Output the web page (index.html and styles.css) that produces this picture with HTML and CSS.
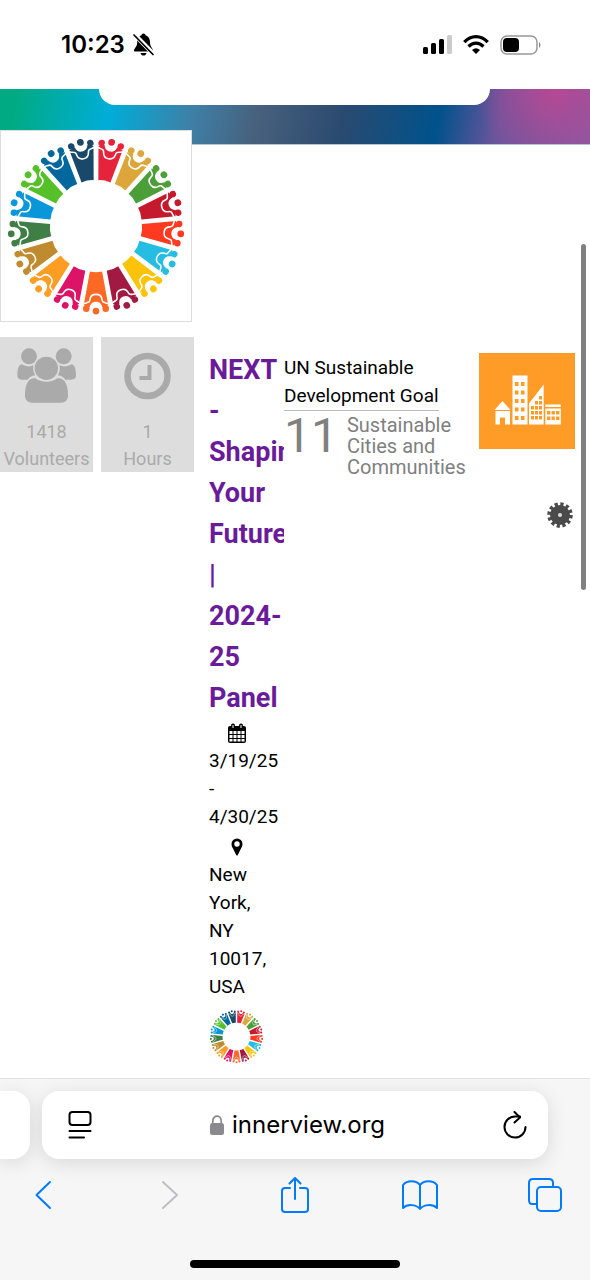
FILE: index.html
```html
<!DOCTYPE html>
<html lang="en">
<head>
    <meta charset="UTF-8">
    <meta name="viewport" content="width=device-width, initial-scale=1.0">
    <title>innerview.org</title>
    <link rel="stylesheet" href="styles.css">
</head>
<body>
    <!-- shared shapes -->
    <svg class="defs" aria-hidden="true">
        <symbol id="person" viewBox="-16 -96 32 60" overflow="visible">
            <path fill="currentColor" d="M-6.200-46Q0-47.500 6.200-46L12.400-80L6.400-82C5.500-78 3-76.500 0-76.500S-5.500-78-6.400-82L-12.400-80Z"/>
            <circle fill="currentColor" cx="-9.800" cy="-83.500" r="3.300"/>
            <circle fill="currentColor" cx="9.800" cy="-83.500" r="3.300"/>
            <circle fill="currentColor" cx="0" cy="-86" r="3.400"/>
            <path fill="none" stroke="#fff" stroke-width="1.600" d="M-13-78.500C-8-77-6.500-78-6-74C-5-67.500 5-67.500 6-74C6.500-78 8-77 13-78.500"/>
        </symbol>
        <symbol id="wheel" viewBox="-96 -96 192 192">
            <g id="wheel-people"></g>
        </symbol>
    </svg>

    <header class="status">
        <div class="status-left">
            <span class="time">10:23</span>
            <svg width="21" height="23" viewBox="0 0 21 23">
                <path d="M10.500 0.500C9.300 0.500 8.600 1.300 8.500 2.300C5 3.500 4.200 6.500 4.200 9.500C4.200 13.500 1 15.500 1 17.500C1 18.300 1.500 18.500 2.200 18.500H18.800C19.500 18.500 20 18.300 20 17.500C20 15.500 17 13.500 17 9.500C17 6.500 16 3.500 12.500 2.300C12.400 1.300 11.700 0.500 10.500 0.500Z"/>
                <path d="M7.500 20H13.500C13 22 11.800 22.500 10.500 22.500S8 22 7.500 20Z"/>
                <path d="M1.500 1.500L20.500 21" stroke="#fff" stroke-width="4.500"/>
                <path d="M1 2L20 21.500" stroke="#000" stroke-width="1.700" stroke-linecap="round"/>
            </svg>
        </div>
        <div class="status-right">
            <svg width="29" height="19" viewBox="0 0 29 19">
                <rect x="0" y="12" width="5" height="7" rx="1.500"/>
                <rect x="8" y="8" width="5" height="11" rx="1.500"/>
                <rect x="16" y="4" width="5" height="15" rx="1.500"/>
                <rect x="24" y="0" width="5" height="19" rx="1.500" fill="#ccc"/>
            </svg>
            <svg width="26" height="19" viewBox="0 0 26 19">
                <g fill="none" stroke="#000" stroke-width="3.300">
                    <path d="M1.300 7.200C8-0.200 18-0.200 24.700 7.200"/>
                    <path d="M5.500 11.500C10 7 16 7 20.500 11.500"/>
                </g>
                <path d="M9 15Q13 11.500 17 15L13 19Z"/>
            </svg>
            <svg width="41" height="20" viewBox="0 0 41 20">
                <rect x="1" y="1" width="36" height="18" rx="6" fill="none" stroke="#999" stroke-width="1.500"/>
                <rect x="3" y="3" width="16" height="14" rx="4"/>
                <path d="M39 7Q42 10 39 13Z" fill="#888"/>
            </svg>
        </div>
    </header>

    <main class="page">
        <div class="hero">
            <div class="hero-card"></div>
        </div>
        <div class="logo">
            <svg class="wheel" viewBox="-96 -96 192 192" role="img" aria-label="Global Goals"><use href="#wheel" x="-96" y="-96" width="192" height="192"/></svg>
        </div>

        <div class="columns">
            <div class="stats">
                <div class="stat">
                    <svg width="59" height="55" viewBox="51 55 177 165">
                        <circle cx="87" cy="80" r="24"/>
                        <circle cx="191" cy="80" r="24"/>
                        <path d="M66 104C75 111 91 112 100 107C98 120 101 130 106 137C94 138 88 143 83 150H66C56 150 52 145 52 136C52 120 56 104 66 104Z"/>
                        <path d="M214 104C205 111 189 112 179 107C181 120 178 130 173 137C185 138 191 143 196 150H213C224 150 228 145 228 136C228 120 224 104 214 104Z"/>
                        <circle cx="139" cy="116" r="35"/>
                        <path d="M106 146C124 160 154 160 172 146C195 144 204 166 204 197C204 212 196 219 182 219H98C83 219 75 212 75 197C75 166 84 144 106 146Z"/>
                    </svg>
                    <span>1418</span>
                    <span>Volunteers</span>
                </div>
                <div class="stat">
                    <svg width="47" height="55" viewBox="0 0 47 55">
                        <circle cx="23.500" cy="28" r="20" fill="none" stroke="#aaa" stroke-width="6.500"/>
                        <path d="M25.500 17V30H15.500" fill="none" stroke="#aaa" stroke-width="4"/>
                    </svg>
                    <span>1</span>
                    <span>Hours</span>
                </div>
            </div>

            <div class="event">
                <h1><a href="#">NEXT - Shaping Your Future | 2024-25 Panel</a></h1>
                <p>
                    <svg class="icon" width="20" height="20" viewBox="0 0 20 20">
                        <path fill-rule="evenodd" d="M1 5Q1 3 3 3H17Q19 3 19 5V18Q19 20 17 20H3Q1 20 1 18ZM2.500 8V11H5.500V8ZM6.500 8V11H9.500V8ZM10.500 8V11H13.500V8ZM14.500 8V11H17.500V8ZM2.500 12V15H5.500V12ZM6.500 12V15H9.500V12ZM10.500 12V15H13.500V12ZM14.500 12V15H17.500V12ZM2.500 16V18.500H5.500V16ZM6.500 16V18.500H9.500V16ZM10.500 16V18.500H13.500V16ZM14.500 16V18.500H17.500V16Z"/>
                        <rect x="4.500" y="1" width="3" height="5" rx="1.300" stroke="#000"/>
                        <rect x="12.500" y="1" width="3" height="5" rx="1.300" stroke="#000"/>
                        <path d="M6 2V5M14 2V5" stroke="#fff"/>
                    </svg>
                    3/19/25 - 4/30/25
                </p>
                <p>
                    <svg class="icon" width="12" height="18" viewBox="0 0 12 18">
                        <path fill-rule="evenodd" d="M6 0.500A5.500 5.500 0 0 0 0.500 6C0.500 8 1.500 9.500 2 10.500L5.200 17Q6 18 6.800 17L10 10.500C10.500 9.500 11.500 8 11.500 6A5.500 5.500 0 0 0 6 0.500ZM6 3.300A2.700 2.700 0 1 1 6 8.700A2.700 2.700 0 1 1 6 3.300Z"/>
                    </svg>
                    New York, NY 10017, USA
                </p>
                <svg class="wheel small" viewBox="-92 -92 184 184" aria-hidden="true"><use href="#wheel" x="-96" y="-96" width="192" height="192"/></svg>
            </div>

            <div class="goal">
                <h2>UN Sustainable<br>Development Goal</h2>
                <div class="goal-name">
                    <span class="number">11</span>
                    <span>Sustainable Cities and Communities</span>
                </div>
            </div>

            <div class="side">
                <svg class="goal-icon" viewBox="0 0 96 96" role="img" aria-label="Sustainable Cities and Communities">
                    <rect width="96" height="96" fill="#ff9c27"/>
                    <g fill="#fff">
                        <path d="M23.500 48L31.500 57H15.500Z"/>
                        <path d="M16.500 58H31V71.500H26V64.500H21V71.500H16.500Z"/>
                        <rect x="33.500" y="22.500" width="15" height="49"/>
                        <path d="M50 50.500L64.700 31.500V71.500H50Z"/>
                        <rect x="66.300" y="51.500" width="15.500" height="2.500"/>
                        <rect x="66.300" y="55.500" width="15.500" height="16"/>
                    </g>
                    <g fill="none" stroke="#ff9c27">
                        <path d="M37.700 29V67M43.700 29V67" stroke-width="3.600" stroke-dasharray="4 4.500"/>
                        <path d="M53.500 53V67M57.500 48V67M61.500 43V67" stroke-width="3" stroke-dasharray="3.500 1.500"/>
                        <path d="M69.700 58V67M74.200 58V67M78.700 58V67" stroke-width="3.300" stroke-dasharray="3.500 2"/>
                    </g>
                </svg>
                <button class="gear" aria-label="Settings">
                    <svg width="26" height="26" viewBox="-13 -13 26 26">
                        <circle r="10" fill="#4a4a4a"/>
                        <circle r="11" fill="none" stroke="#4a4a4a" stroke-width="3.500" stroke-dasharray="3.200 2.560"/>
                        <circle r="2" fill="#ddd"/>
                    </svg>
                </button>
            </div>
        </div>
        <div class="scroll-thumb"></div>
    </main>

    <footer class="browser">
        <div class="tabs">
            <div class="tab-edge"></div>
            <div class="address">
                <button aria-label="Page menu">
                    <svg width="24" height="28" viewBox="0 0 24 28" fill="none" stroke="#000" stroke-width="2" stroke-linecap="round">
                        <rect x="1.500" y="1" width="21" height="13" rx="3"/>
                        <path d="M1.500 20H22.500M1.500 26.500H16"/>
                    </svg>
                </button>
                <a class="url" href="#">
                    <svg width="14" height="20" viewBox="0 0 14 20">
                        <rect x="0" y="8" width="14" height="12" rx="2.500" fill="#8a8a8e"/>
                        <path d="M2.800 9V6C2.800-0.500 11.200-0.500 11.200 6V9" fill="none" stroke="#8a8a8e" stroke-width="1.700"/>
                    </svg>
                    <span>innerview.org</span>
                </a>
                <button aria-label="Reload">
                    <svg width="24" height="28" viewBox="0 0 24 28" fill="none" stroke="#000" stroke-width="2" stroke-linecap="round" stroke-linejoin="round">
                        <path d="M22.500 16A10.500 10.500 0 1 1 12 5.500H17"/>
                        <path d="M11.500 1L17 6.500L11.500 11.500"/>
                    </svg>
                </button>
            </div>
        </div>
        <nav class="tools">
            <button aria-label="Back">
                <svg width="36" height="36" viewBox="0 0 36 36"><path d="M24 5L10.500 18L24 31"/></svg>
            </button>
            <button class="off" aria-label="Forward" disabled>
                <svg width="36" height="36" viewBox="0 0 36 36"><path d="M12 5L26 18L12 31"/></svg>
            </button>
            <button aria-label="Share">
                <svg width="36" height="36" viewBox="0 0 36 36"><path d="M13 11H8Q5 11 5 14V32Q5 35 8 35H28Q31 35 31 32V14Q31 11 28 11H23M18 22V1M12.500 6.500L18 1L23.500 6.500"/></svg>
            </button>
            <button aria-label="Bookmarks">
                <svg width="36" height="36" viewBox="0 0 36 36"><path d="M18 8C14 3 5 3 1 8V31C5 27 14 27 18 32C22 27 31 27 35 31V8C31 3 22 3 18 8V31"/></svg>
            </button>
            <button aria-label="Tabs">
                <svg width="36" height="36" viewBox="0 0 36 36"><rect x="10" y="10" width="24" height="24" rx="4"/><path d="M9.500 27H5Q2 27 2 23V6Q2 2 6 2H22Q26 2 26 6V9.500"/></svg>
            </button>
        </nav>
        <div class="home-bar"></div>
    </footer>

    <script src="wheel.js"></script>
</body>
</html>
```

FILE: styles.css
```css
* {
    box-sizing: border-box;
    margin: 0;
    padding: 0;
}
body {
    display: flex;
    flex-direction: column;
    min-height: 100vh;
    background: #fff;
    color: #000;
    font-family: Roboto, "Liberation Sans", sans-serif;
    font-size: 19px;
    line-height: 28px;
}
svg {
    display: block;
    flex-shrink: 0;
}
button {
    border: 0;
    background: none;
}
a {
    color: inherit;
    text-decoration: none;
}
.defs {
    position: absolute;
    width: 0;
    height: 0;
}

/* status bar */
.status {
    display: flex;
    justify-content: space-between;
    align-items: center;
    height: 89px;
    padding: 0 49px 0 61px;
}
.status-left {
    display: flex;
    align-items: center;
    gap: 8px;
}
.status-right {
    display: flex;
    align-items: center;
    gap: 11px;
}
.time {
    font-family: Inter, sans-serif;
    font-size: 24px;
    font-weight: 600;
}

/* page */
.page {
    position: relative;
    flex: 1;
}
.hero {
    height: 56px;
    padding: 0 100px 0 99px;
    border-bottom: 1px solid #b9c3d6;
    background: radial-gradient(circle at 94% 0, #b74894 0, rgba(183, 72, 148, 0) 80px),
        linear-gradient(100deg, #00ab84 3%, #00add8 19%, #3f7fa6 33%, #47607c 44%, #2a4a70 58%, #00528c 74%, #6a559c 84%, #8a5aa3 100%);
}
.hero-card {
    height: 16px;
    border-radius: 0 0 20px 20px;
    background: #fff;
}
.logo {
    position: relative;
    width: 192px;
    margin-top: -15px;
    border: 1px solid #ddd;
    background: #fff;
}
.wheel {
    width: 100%;
}
.columns {
    display: grid;
    grid-template-columns: 194px 75px 1fr 96px;
    margin-top: 15px;
    padding-right: 15px;
    align-items: start;
}
.stats {
    display: grid;
    grid-template-columns: 1fr 1fr;
    gap: 8px;
}
.stat {
    display: flex;
    flex-direction: column;
    align-items: center;
    padding-top: 11px;
    background: #ddd;
    color: #aaa;
    fill: #aaa;
    font-size: 18px;
    line-height: 27px;
}
.stat svg {
    margin-bottom: 15px;
}
.event {
    width: 75px;
    margin-left: 15px;
    padding: 13px 20px 0 0;
    overflow: hidden;
}
.event h1 {
    color: #6a1b9a;
    font-size: 27px;
    line-height: 41px;
}
.event p {
    margin-bottom: 2px;
}
.icon {
    height: 28px;
    margin: 0 auto;
}
.small {
    margin-top: 8px;
}
.goal {
    margin-left: 15px;
    padding: 17px 12px 0 0;
}
.goal h2 {
    width: fit-content;
    border-bottom: 1px solid #bbb;
    font-size: 19px;
    font-weight: 400;
}
.goal-name {
    display: flex;
    gap: 9px;
    padding-top: 4px;
    color: #808080;
    font-size: 20px;
    line-height: 21px;
}
.number {
    font-size: 48px;
    line-height: 42px;
}
.side {
    display: flex;
    flex-direction: column;
    align-items: flex-end;
    padding-top: 16px;
}
.goal-icon {
    width: 96px;
}
.gear {
    margin: 53px 2px 0 0;
}
.scroll-thumb {
    position: absolute;
    top: 155px;
    right: 4px;
    width: 5px;
    height: 346px;
    border-radius: 3px;
    background: #808080;
}

/* browser bar */
.browser {
    padding: 12px 0;
    border-top: 1px solid #e2e2e4;
    background: #f6f6f7;
    overflow: hidden;
}
.tabs {
    display: flex;
    gap: 12px;
    padding-right: 42px;
}
.tab-edge {
    width: 30px;
    border-radius: 0 17px 17px 0;
    background: #fff;
    box-shadow: 0 4px 20px rgba(0, 0, 0, 0.12);
}
.address {
    display: flex;
    flex: 1;
    justify-content: space-between;
    align-items: center;
    height: 68px;
    padding: 0 21px 0 26px;
    border-radius: 17px;
    background: #fff;
    box-shadow: 0 4px 20px rgba(0, 0, 0, 0.12);
}
.url {
    display: flex;
    align-items: center;
    gap: 8px;
    font-family: Inter, sans-serif;
    font-size: 24px;
}
.tools {
    display: flex;
    justify-content: space-between;
    padding: 18px 27px 0 26px;
}
.tools svg {
    fill: none;
    stroke: #007aff;
    stroke-width: 2;
    stroke-linecap: round;
    stroke-linejoin: round;
}
.tools .off svg {
    stroke: #bfbfc1;
}
.home-bar {
    width: 210px;
    height: 8px;
    margin: 47px auto 0;
    border-radius: 4px;
    background: #000;
}
```

FILE: wheel.js
```js
var colors = ["#e5243b", "#dda63a", "#4c9f38", "#c5192d", "#ff3a21", "#26bde2", "#fcc30b", "#a21942", "#fd6925",
    "#dd1367", "#fd9d24", "#bf8b2e", "#3f7e44", "#0a97d9", "#56c02b", "#00689d", "#19486a"];
var people = document.getElementById("wheel-people");
var person = document.getElementById("person").innerHTML;
var html = "";
for (var i = 0; i < colors.length; i++) {
    var angle = (i + 0.5) * 360 / colors.length;
    html += '<g color="' + colors[i] + '" transform="rotate(' + angle + ')">' + person + '</g>';
}
people.innerHTML = html;
```
